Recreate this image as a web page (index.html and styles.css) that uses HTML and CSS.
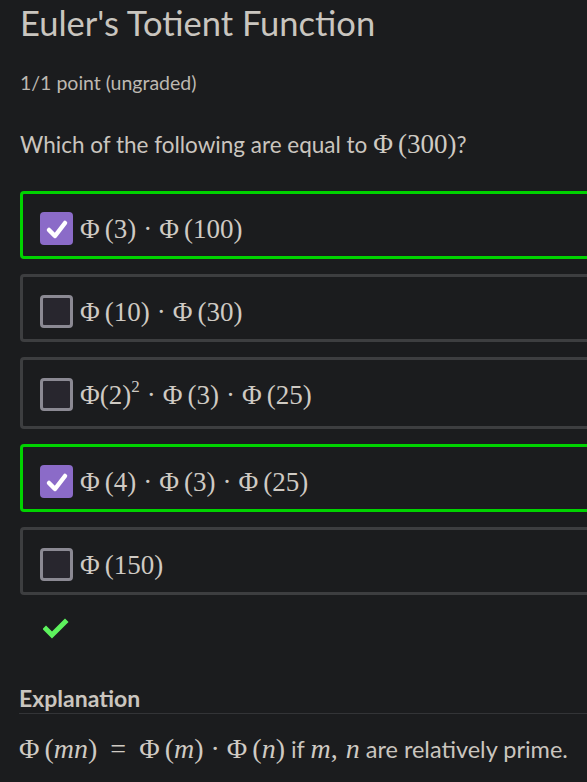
FILE: index.html
```html
<!DOCTYPE html>
<html>
<head>
<meta charset="utf-8">
<link rel="stylesheet" href="styles.css">
</head>
<body>
<div class="page">
  <h1 class="title">Euler's Totient Function</h1>
  <div class="points">1/1 point (ungraded)</div>
  <p class="question">Which of the following are equal to <span class="math">Φ<span class="sp"></span>(300)</span>?</p>

  <div class="options">
    <label class="option correct">
      <span class="box checked"><svg viewBox="0 0 32 32" width="32" height="32"><path d="M8 17 L14 23 L24 10" fill="none" stroke="#fff" stroke-width="4.5" stroke-linecap="round" stroke-linejoin="round"/></svg></span>
      <span class="math">Φ<span class="sp"></span>(3)<span class="op">·</span>Φ<span class="sp"></span>(100)</span>
    </label>
    <label class="option">
      <span class="box"></span>
      <span class="math">Φ<span class="sp"></span>(10)<span class="op">·</span>Φ<span class="sp"></span>(30)</span>
    </label>
    <label class="option tall">
      <span class="box"></span>
      <span class="math">Φ(2)<sup>2</sup><span class="op">·</span>Φ<span class="sp"></span>(3)<span class="op">·</span>Φ<span class="sp"></span>(25)</span>
    </label>
    <label class="option correct">
      <span class="box checked"><svg viewBox="0 0 32 32" width="32" height="32"><path d="M8 17 L14 23 L24 10" fill="none" stroke="#fff" stroke-width="4.5" stroke-linecap="round" stroke-linejoin="round"/></svg></span>
      <span class="math">Φ<span class="sp"></span>(4)<span class="op">·</span>Φ<span class="sp"></span>(3)<span class="op">·</span>Φ<span class="sp"></span>(25)</span>
    </label>
    <label class="option">
      <span class="box"></span>
      <span class="math">Φ<span class="sp"></span>(150)</span>
    </label>
  </div>

  <div class="status">
    <svg viewBox="0 0 26 22" width="26" height="22"><path d="M3 12 L9 18 L22 5" fill="none" stroke="#5df25d" stroke-width="5" stroke-linecap="square" stroke-linejoin="miter"/></svg>
  </div>

  <h3 class="expl-title">Explanation</h3>
  <p class="expl"><span class="math big">Φ<span class="sp"></span>(<i>mn</i>)<span class="rel">=</span>Φ<span class="sp"></span>(<i>m</i>)<span class="op">·</span>Φ<span class="sp"></span>(<i>n</i>)</span> if <span class="math big"><i>m</i>,<span class="sp wide"></span><i>n</i></span> are relatively prime.</p>
</div>
</body>
</html>
```
FILE: styles.css
```css
html, body {
  margin: 0;
  padding: 0;
  background: #1b1c1e;
  overflow: hidden;
}
.page {
  width: 640px;
  padding-left: 20px;
  color: #cac5bf;
  font-family: Lato, "Open Sans", sans-serif;
}
.title {
  margin: 0;
  padding-top: 1px;
  font-size: 34.5px;
  font-weight: 400;
  line-height: 44px;
  color: #c9c5bf;
}
.points {
  margin-top: 26px;
  font-size: 19.5px;
  line-height: 24px;
  color: #bdb8b1;
}
.question {
  margin: 35px 0 0;
  font-size: 22.5px;
  line-height: 28px;
}
.math {
  font-family: "Liberation Serif", "DejaVu Serif", serif;
  font-size: 27px;
  color: #cfcac3;
}
.math.big { font-size: 28px; }
.math i { font-style: italic; }
.sp { display: inline-block; width: 5px; }
.sp.wide { width: 8px; }
.op { display: inline-block; padding: 0 7px; }
.rel { display: inline-block; padding: 0 13px; }
.math sup { font-size: 17px; line-height: 0; vertical-align: 12px; }
.options {
  margin-top: 32px;
  display: flex;
  flex-direction: column;
  gap: 15px;
}
.option {
  display: flex;
  align-items: flex-start;
  gap: 7px;
  border: 3px solid #3d3e40;
  border-radius: 4px;
  padding: 18px 17px 10px;
  height: 34px;
}
.option.tall { height: 38px; }
.option.correct { border-color: #00d300; }
.option .math { line-height: 22px; padding-top: 6px; }
.box {
  flex: none;
  width: 27px;
  height: 27px;
  border: 3px solid #8b8993;
  border-radius: 4px;
  background: #28262e;
}
.box.checked {
  width: 33px;
  height: 33px;
  border: none;
  background: #8b6bc8;
  display: flex;
  align-items: center;
  justify-content: center;
}
.status {
  height: 50px;
  padding: 22px 0 0 23px;
  box-sizing: border-box;
}
.expl-title {
  margin: 40px 0 0;
  font-size: 23px;
  font-weight: 700;
  line-height: 26px;
  padding-bottom: 2px;
  border-bottom: 1px solid #333437;
  margin-left: -1px;
}
.expl {
  margin: 20px 0 0;
  font-size: 23.5px;
  line-height: 30px;
  margin-left: -1px;
}
```
